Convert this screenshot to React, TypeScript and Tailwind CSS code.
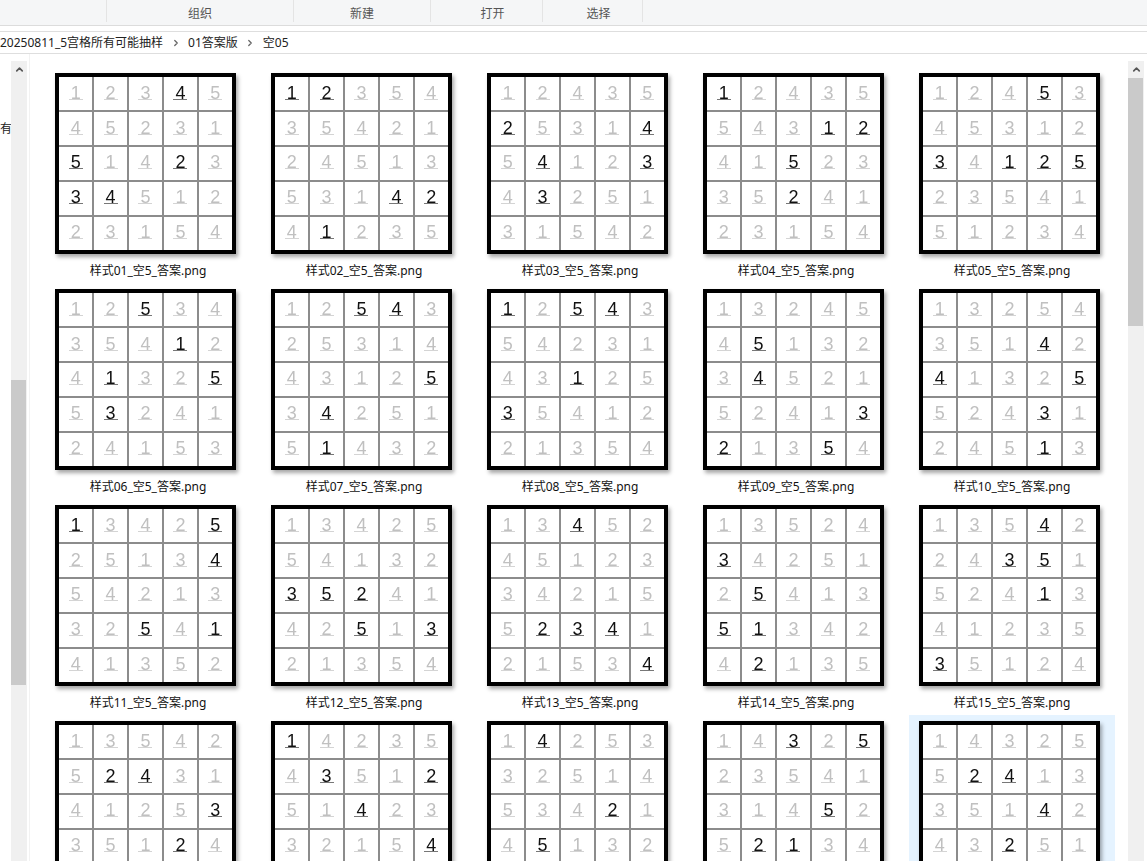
import { ChevronRight, ChevronUp } from 'lucide-react'

// one string per picture, rows split by "/", a * marks the dark digits
const samples = [
  '1 2 3 *4 5/4 5 2 3 1/*5 1 4 *2 3/*3 *4 5 1 2/2 3 1 5 4',
  '*1 *2 3 5 4/3 5 4 2 1/2 4 5 1 3/5 3 1 *4 *2/4 *1 2 3 5',
  '1 2 4 3 5/*2 5 3 1 *4/5 *4 1 2 *3/4 *3 2 5 1/3 1 5 4 2',
  '*1 2 4 3 5/5 4 3 *1 *2/4 1 *5 2 3/3 5 *2 4 1/2 3 1 5 4',
  '1 2 4 *5 3/4 5 3 1 2/*3 4 *1 *2 *5/2 3 5 4 1/5 1 2 3 4',
  '1 2 *5 3 4/3 5 4 *1 2/4 *1 3 2 *5/5 *3 2 4 1/2 4 1 5 3',
  '1 2 *5 *4 3/2 5 3 1 4/4 3 1 2 *5/3 *4 2 5 1/5 *1 4 3 2',
  '*1 2 *5 *4 3/5 4 2 3 1/4 3 *1 2 5/*3 5 4 1 2/2 1 3 5 4',
  '1 3 2 4 5/4 *5 1 3 2/3 *4 5 2 1/5 2 4 1 *3/*2 1 3 *5 4',
  '1 3 2 5 4/3 5 1 *4 2/*4 1 3 2 *5/5 2 4 *3 1/2 4 5 *1 3',
  '*1 3 4 2 *5/2 5 1 3 *4/5 4 2 1 3/3 2 *5 4 *1/4 1 3 5 2',
  '1 3 4 2 5/5 4 1 3 2/*3 *5 *2 4 1/4 2 *5 1 *3/2 1 3 5 4',
  '1 3 *4 5 2/4 5 1 2 3/3 4 2 1 5/5 *2 *3 *4 1/2 1 5 3 *4',
  '1 3 5 2 4/*3 4 2 5 1/2 *5 4 1 3/*5 *1 3 4 2/4 *2 1 3 5',
  '1 3 5 *4 2/2 4 *3 *5 1/5 2 4 *1 3/4 1 2 3 5/*3 5 1 2 4',
  '1 3 5 4 2/5 *2 *4 3 1/4 1 2 5 *3/3 5 1 *2 4/2 4 3 1 5',
  '*1 4 2 3 5/4 *3 5 1 *2/5 1 *4 2 3/3 2 1 5 *4/2 5 3 4 1',
  '1 *4 2 5 3/3 2 5 1 4/5 3 4 *2 1/4 *5 1 3 2/2 1 3 4 5',
  '1 4 *3 2 *5/2 3 5 4 1/3 1 4 *5 2/5 *2 *1 3 4/4 5 2 1 3',
  '1 4 3 2 5/5 *2 *4 1 3/3 5 1 *4 2/4 3 *2 5 1/2 1 5 3 4',
]

const groups = [
  { label: '组织', width: 'w-[187px]' },
  { label: '新建', width: 'w-[137px]' },
  { label: '打开', width: 'w-[112px] pl-3' },
  { label: '选择', width: 'w-[100px] pl-3' },
]

function Scrollbar({ thumb }: { thumb: string }) {
  return (
    <div className="mt-[7px] flex w-4 shrink-0 flex-col bg-[#f0f0f0]">
      <div className="flex h-[17px] items-center justify-center text-[#555]">
        <ChevronUp size={11} strokeWidth={3.5} />
      </div>
      <div className={`w-[15px] bg-[#cacaca] ${thumb}`} />
    </div>
  )
}

function Puzzle({ data }: { data: string }) {
  const cells = data.split('/').flatMap((row) => row.split(' '))
  return (
    <div className="h-[181px] w-[181px] border-4 border-black shadow-[2px_3px_4px_rgba(0,0,0,0.35)]">
      <div className="grid h-full grid-cols-5 grid-rows-5 gap-[1.5px] bg-[#8c8c8c] blur-[0.5px]">
        {cells.map((cell, i) => {
          const dark = cell.startsWith('*')
          return (
            <div key={i} className="flex items-center justify-center bg-white font-['Liberation_Sans',sans-serif]">
              <span
                className={
                  dark
                    ? 'w-[14px] border-b border-[#777] text-center text-[18px] leading-[11px] text-[#111]'
                    : 'w-[14px] border-b border-[#d4d4d4] text-center text-[18px] leading-[11px] text-[#c0c0c0]'
                }
              >
                {cell.replace('*', '')}
              </span>
            </div>
          )
        })}
      </div>
    </div>
  )
}

export default function App() {
  return (
    <div className="flex h-[861px] w-[1147px] flex-col overflow-hidden bg-white font-['Noto_Sans','Noto_Sans_CJK_SC',sans-serif] text-xs">
      <div className="flex h-[26px] shrink-0 border-b border-[#dcdcdc] bg-[#f5f6f7]">
        <div className="mb-[3px] w-[107px] border-r border-[#e4e4e4]" />
        {groups.map((g) => (
          <div
            key={g.label}
            className={`mb-[3px] flex items-center justify-center border-r border-[#e4e4e4] pt-[5px] text-[#555] ${g.width}`}
          >
            {g.label}
          </div>
        ))}
      </div>

      <div className="mt-[5px] flex h-[23px] shrink-0 items-center border-y border-[#dedede] text-[#222]">
        <span>20250811_5宫格所有可能抽样</span>
        <span className="flex w-[25px] justify-center text-[#666]">
          <ChevronRight size={10} strokeWidth={3} />
        </span>
        <span>01答案版</span>
        <span className="flex w-[25px] justify-center text-[#666]">
          <ChevronRight size={10} strokeWidth={3} />
        </span>
        <span>空05</span>
      </div>

      <div className="flex min-h-0 flex-1">
        <div className="w-[11px] shrink-0 overflow-hidden pt-[67px] leading-4 text-[#222]">有</div>
        <Scrollbar thumb="mt-[302px] h-[305px]" />
        <div className="ml-[2px] w-px shrink-0 bg-[#f2f2f2]" />

        <div className="min-w-0 flex-1 overflow-hidden pl-[15px] pt-[13px]">
          <div className="grid w-[1070px] grid-cols-[repeat(5,206px)] gap-x-[10px] gap-y-1">
            {samples.map((data, i) => (
              <div key={i} className={i === 19 ? 'h-[212px] bg-[#e5f3ff] pl-[10px] pt-[6px]' : 'h-[212px] pl-[10px] pt-[6px]'}>
                <Puzzle data={data} />
                <div className="mt-[8px] -ml-[10px] text-center leading-[18px] text-[#111]">
                  样式{String(i + 1).padStart(2, '0')}_空5_答案.png
                </div>
              </div>
            ))}
          </div>
        </div>

        <Scrollbar thumb="h-[248px]" />
        <div className="w-[3px] shrink-0" />
      </div>
    </div>
  )
}
